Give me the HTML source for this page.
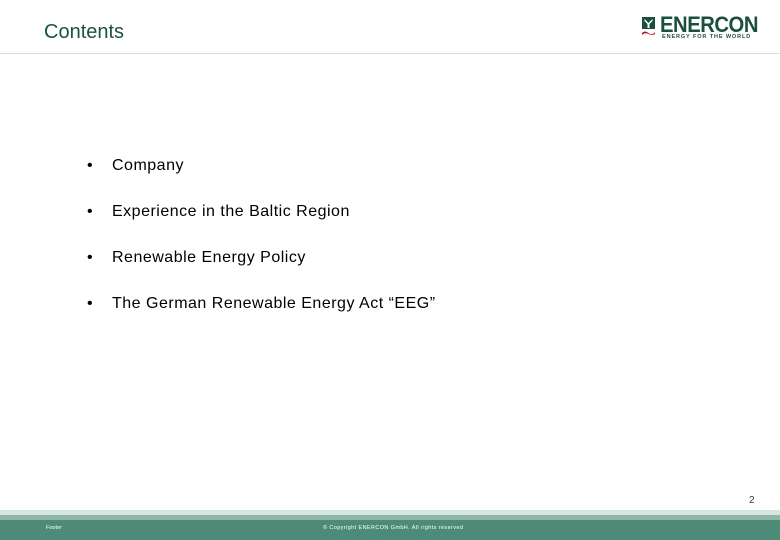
<!DOCTYPE html>
<html><head><meta charset="utf-8"><style>
body{margin:0;width:780px;height:540px;position:relative;background:#fff;font-family:"Liberation Sans",Arial,sans-serif;overflow:hidden}
.t{position:absolute;left:44px;top:21px;font-size:20px;color:#1b5240}
.hl{position:absolute;left:0;top:53px;width:780px;height:1px;background:#d5dedb}
.li{position:absolute;left:87px;font-size:16px;color:#000;letter-spacing:0.5px}
.li span{position:absolute;left:25px;white-space:nowrap}
.pg{position:absolute;left:749px;top:495px;font-size:10px;color:#1b4a3a}
.b1{position:absolute;left:0;top:510px;width:780px;height:5px;background:#d3e7df}
.b2{position:absolute;left:0;top:515px;width:780px;height:5px;background:#8fb5a7}
.b3{position:absolute;left:0;top:520px;width:780px;height:20px;background:#4e8a78}
.f{position:absolute;top:525px;font-size:5.5px;color:#fff;white-space:nowrap}
.logo{position:absolute;left:642px;top:17px}
.lt{position:absolute;left:660px;top:12px;font-size:22px;font-weight:bold;color:#1c4f3c;letter-spacing:-0.5px;transform:scaleX(0.92);transform-origin:left}
.ls{position:absolute;left:662px;top:34px;font-size:5.5px;font-weight:bold;color:#1c4f3c;letter-spacing:0.9px;white-space:nowrap}
</style></head><body>
<div class="t">Contents</div>
<div class="hl"></div>
<svg class="logo" width="16" height="20" viewBox="0 0 16 20">
<rect x="0" y="0" width="13" height="12" fill="#1c4f3c"/>
<path d="M2.5 2 L6.5 6 L10.5 2 L10.5 4 L7.5 7 L7.5 11 L5.5 11 L5.5 7 L2.5 4Z" fill="#fff"/>
<path d="M0 16 Q3 13 6.5 16 T13 15 L13 17 Q10 19 6.5 17 T0 18Z" fill="#c8102e"/>
</svg>
<div class="lt">ENERCON</div>
<div class="ls">ENERGY FOR THE WORLD</div>
<div class="li" style="top:157px">•<span>Company</span></div>
<div class="li" style="top:203px">•<span>Experience in the Baltic Region</span></div>
<div class="li" style="top:249px">•<span>Renewable Energy Policy</span></div>
<div class="li" style="top:295px">•<span>The German Renewable Energy Act “EEG”</span></div>
<div class="pg">2</div>
<div class="b1"></div><div class="b2"></div><div class="b3"></div>
<div class="f" style="left:46px">Footer</div>
<div class="f" style="left:323px;letter-spacing:0.4px">© Copyright ENERCON GmbH. All rights reserved</div>
</body></html>
